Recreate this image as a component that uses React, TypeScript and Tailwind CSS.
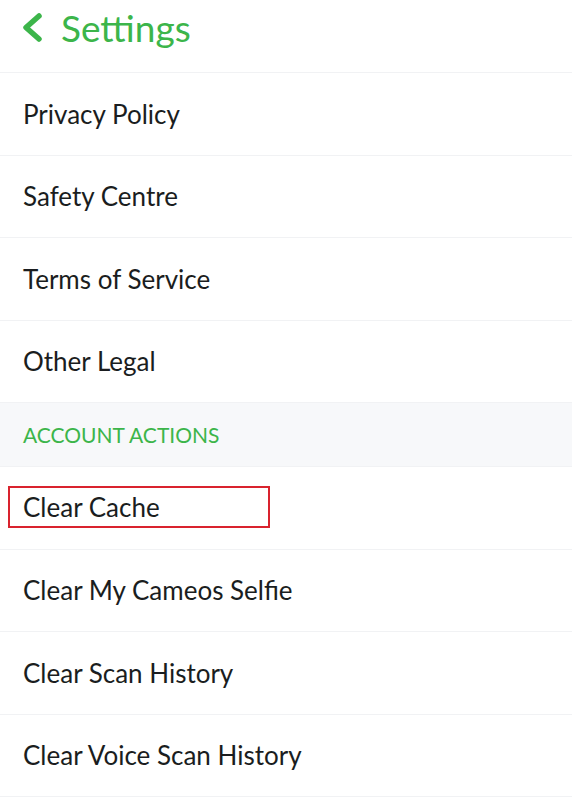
const legal = ["Privacy Policy", "Safety Centre", "Terms of Service", "Other Legal"];
const actions = ["Clear Cache", "Clear My Cameos Selfie", "Clear Scan History", "Clear Voice Scan History"];

function Row({ label, highlight }: { label: string; highlight?: boolean }) {
  return (
    <div className="h-[82.5px] border-b border-[#f1f2f4] flex items-center">
      {highlight ? (
        <div className="ml-2 w-[262px] h-[42px] border-2 border-[#d9232e] flex items-center pl-[13px] -mt-[2px]">
          <span>{label}</span>
        </div>
      ) : (
        <span className="pl-[23px]">{label}</span>
      )}
    </div>
  );
}

export default function App() {
  return (
    <div className="w-[572px] h-[798px] bg-white overflow-hidden text-[#1a1d20] text-[26px] leading-[32px] font-['Lato',sans-serif]">
      {/* Header */}
      <div className="h-[73px] border-b border-[#f1f2f4] flex items-start pt-[6px]">
        <svg width="44" height="40" viewBox="0 0 44 40" className="ml-[8px] mt-[4px]">
          <path d="M31 6 L18 17.5 L31 29" fill="none" stroke="#3cb54a" strokeWidth="5.5" strokeLinecap="round" strokeLinejoin="round" />
        </svg>
        <span className="ml-[9px] text-[37px] leading-[44px] text-[#3cb54a]">Settings</span>
      </div>
      {legal.map((l) => (
        <Row key={l} label={l} />
      ))}
      {/* Section header */}
      <div className="h-[64px] bg-[#f7f8fa] flex items-center pl-[23px] text-[21px] text-[#3cb54a] border-b border-[#f1f2f4]">
        ACCOUNT ACTIONS
      </div>
      {actions.map((a, i) => (
        <Row key={a} label={a} highlight={i === 0} />
      ))}
    </div>
  );
}
